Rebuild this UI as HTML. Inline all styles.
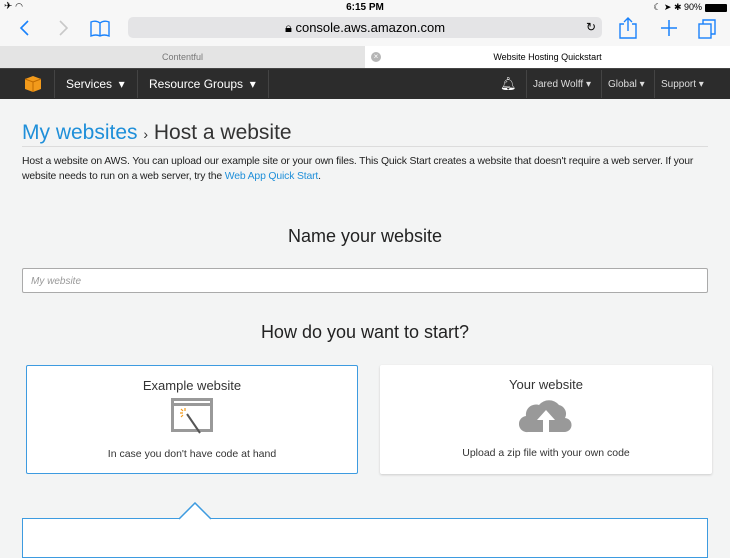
<!DOCTYPE html>
<html><head><style>
*{margin:0;padding:0;box-sizing:border-box}
body{width:730px;height:547px;overflow:hidden;background:#f3f4f4;font-family:"Liberation Sans",sans-serif;position:relative;color:#333}
.a{position:absolute}
</style></head><body>
<div class="a" style="left:0;top:0;width:730px;height:46px;background:#f7f7f7"></div>
<div class="a" style="left:4px;top:1px;font-size:10px;color:#000">✈ ︎<span style="font-size:9px">◠</span></div>
<div class="a" style="left:0;width:730px;top:2px;text-align:center;font-size:10px;font-weight:bold;color:#000">6:15 PM</div>
<div class="a" style="right:28px;top:2px;font-size:9px;color:#000">☾ ➤ ✱ 90%</div>
<div class="a" style="right:3px;top:4px;width:22px;height:8px;background:#000;border-radius:1px"></div>
<svg class="a" style="left:0;top:14px" width="730" height="30">
<path d="M28 7 L21 14 L28 21" stroke="#1a82fb" stroke-width="1.6" fill="none"/>
<path d="M60 7 L67 14 L60 21" stroke="#c8c8c8" stroke-width="1.6" fill="none"/>
<path d="M91 8 Q96 6 100 9 Q104 6 109 8 V22 Q104 20 100 22 Q96 20 91 22 Z M100 9 V22" stroke="#1a82fb" stroke-width="1.4" fill="none"/>
<path d="M624 10 H620 V24 H636 V10 H632 M628 4 V17 M624 8 L628 4 L632 8" stroke="#1a82fb" stroke-width="1.4" fill="none"/>
<path d="M669 6 V22 M661 14 H677" stroke="#1a82fb" stroke-width="1.5"/>
<rect x="699" y="10" width="12" height="14" stroke="#1a82fb" stroke-width="1.4" fill="none"/>
<path d="M703 10 V6 H715 V20 H711" stroke="#1a82fb" stroke-width="1.4" fill="none"/>
</svg>
<div class="a" style="left:128px;top:17px;width:474px;height:21px;background:#e4e4e6;border-radius:5px;text-align:center;font-size:13px;line-height:21px;color:#000">🔒︎ console.aws.amazon.com<span style="position:absolute;right:6px;font-size:12px">↻</span></div>
<div class="a" style="left:0;top:46px;width:365px;height:22px;background:#e4e4e4;font-size:9px;color:#777;text-align:center;line-height:22px">Contentful</div>
<div class="a" style="left:365px;top:46px;width:365px;height:22px;background:#fff;font-size:9px;color:#000;text-align:center;line-height:22px">Website Hosting Quickstart</div>
<div class="a" style="left:371px;top:52px;width:10px;height:10px;border-radius:50%;background:#b5b5b5;color:#fff;font-size:8px;line-height:10px;text-align:center">×</div>
<div class="a" style="left:0;top:68px;width:730px;height:31px;background:#2c2c2c;border-top:1px solid #444"></div>
<svg class="a" style="left:24px;top:75px" width="18" height="18"><path d="M1 4 L9 1 L17 4 V14 L9 17 L1 14 Z" fill="#f29a1b"/><path d="M1 4 L9 7 L17 4 M9 7 V17" stroke="#c06a00" fill="none"/></svg>
<div class="a" style="left:54px;top:70px;width:1px;height:28px;background:#444"></div>
<div class="a" style="left:66px;top:77px;font-size:12px;color:#fff">Services &nbsp;▾</div>
<div class="a" style="left:137px;top:70px;width:1px;height:28px;background:#444"></div>
<div class="a" style="left:149px;top:77px;font-size:12px;color:#fff">Resource Groups &nbsp;▾</div>
<div class="a" style="left:268px;top:70px;width:1px;height:28px;background:#444"></div>
<div class="a" style="left:500px;top:76px;font-size:13px;color:#fff">🔔︎</div>
<div class="a" style="left:526px;top:70px;width:1px;height:28px;background:#444"></div>
<div class="a" style="left:533px;top:79px;font-size:10px;color:#ddd">Jared Wolff ▾</div>
<div class="a" style="left:601px;top:70px;width:1px;height:28px;background:#444"></div>
<div class="a" style="left:608px;top:79px;font-size:10px;color:#ddd">Global ▾</div>
<div class="a" style="left:654px;top:70px;width:1px;height:28px;background:#444"></div>
<div class="a" style="left:661px;top:79px;font-size:10px;color:#ddd">Support ▾</div>
<div class="a" style="left:22px;top:121px;font-size:21px;color:#333;white-space:nowrap"><span style="color:#1f8fd9">My websites</span> <span style="font-size:14px">›</span> Host a website</div>
<div class="a" style="left:22px;top:146px;width:686px;height:1px;background:#dcdcdc"></div>
<div class="a" style="left:22px;top:154px;width:700px;font-size:10.4px;line-height:15px;color:#222;letter-spacing:-0.15px">Host a website on AWS. You can upload our example site or your own files. This Quick Start creates a website that doesn't require a web server. If your website needs to run on a web server, try the <span style="color:#1f8fd9">Web App Quick Start</span>.</div>
<div class="a" style="left:0;width:730px;top:226px;text-align:center;font-size:18px;color:#222">Name your website</div>
<div class="a" style="left:22px;top:268px;width:686px;height:25px;background:#fff;border:1px solid #aaa;border-radius:2px;font-size:10px;font-style:italic;color:#999;padding:7px 0 0 8px">My website</div>
<div class="a" style="left:0;width:730px;top:322px;text-align:center;font-size:18px;color:#222">How do you want to start?</div>
<div class="a" style="left:26px;top:365px;width:332px;height:109px;background:#fff;border:1.5px solid #3d9be0;border-radius:2px;text-align:center">
<div style="font-size:13px;margin-top:12px">Example website</div>
<svg width="46" height="42" style="margin-top:3px"><rect x="2" y="2" width="42" height="34" fill="#999"/><rect x="5" y="10" width="36" height="23" fill="#fff"/><rect x="5" y="5" width="36" height="2" fill="#fff"/><path d="M18 18 L31 37" stroke="#555" stroke-width="2"/><path d="M16 12 V15 M11 17 H14 M12 13 L14 15 M12 21 L14 19" stroke="#f29a1b" stroke-width="1.2"/></svg>
<div style="font-size:10.5px;margin-top:5px">In case you don't have code at hand</div></div>
<div class="a" style="left:380px;top:365px;width:332px;height:109px;background:#fff;box-shadow:0 1px 2px #ccc;border-radius:2px;text-align:center">
<div style="font-size:13px;margin-top:12px">Your website</div>
<svg width="54" height="42" style="margin-top:3px"><path d="M9 37 A8 8 0 0 1 7 21 A10 10 0 0 1 20 10 A13 13 0 0 1 40 10 A9 9 0 0 1 46 23 A7 7 0 0 1 45 37 Z" fill="#999"/><path d="M27 15 L18 25 H24 V37 H30 V25 H36 Z" fill="#fff"/></svg>
<div style="font-size:10.5px;margin-top:5px">Upload a zip file with your own code</div></div>
<div class="a" style="left:22px;top:518px;width:686px;height:40px;background:#fff;border:1.5px solid #3d9be0"></div>
<svg class="a" style="left:178px;top:502px" width="34" height="18"><path d="M1 17 L17 1 L33 17" fill="#fff" stroke="#3d9be0" stroke-width="1.5"/></svg>
</body></html>
